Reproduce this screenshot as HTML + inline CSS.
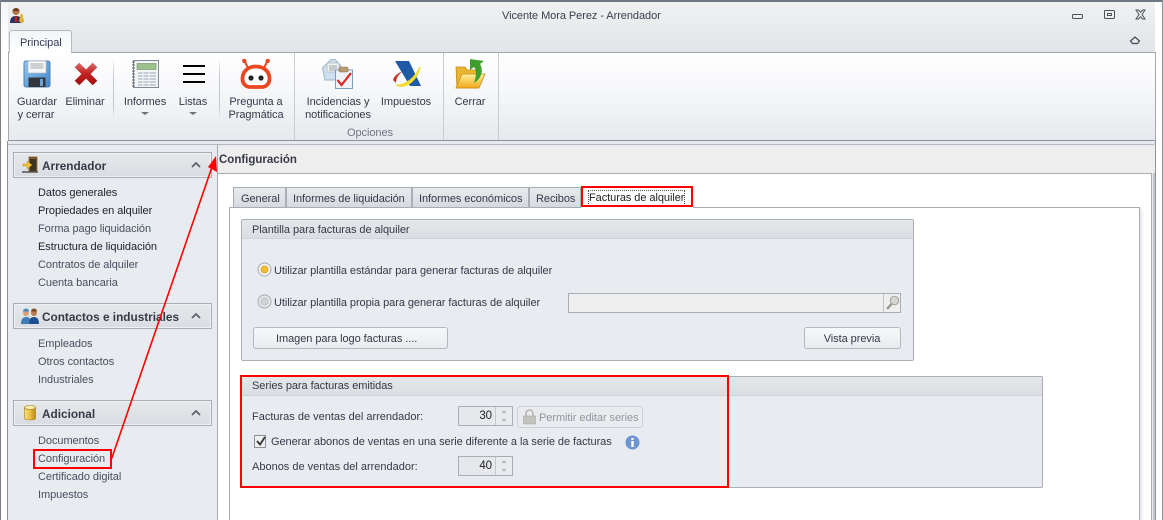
<!DOCTYPE html>
<html lang="es">
<head>
<meta charset="utf-8">
<title>Vicente Mora Perez - Arrendador</title>
<style>
html,body{margin:0;padding:0}
body{width:1163px;height:520px;position:relative;overflow:hidden;background:#fff;font-family:"Liberation Sans",sans-serif;font-size:11px;letter-spacing:-.06px;color:#363948}
div,span,svg{position:absolute;box-sizing:border-box}
.t{white-space:nowrap;line-height:14px;height:14px;margin-top:1px}
.c{text-align:center;transform:translateX(-50%)}
.d{color:#1d1f2b}
.g{color:#47505f}
.h{font-weight:bold;font-size:11.8px;letter-spacing:0;color:#353a46}
.gh{background:linear-gradient(#e6e9ec,#d9dde1);border:1px solid #a9adb5;height:26px;left:13px;width:199px;box-shadow:inset 0 0 0 1px #eef0f3}
.vs{width:1px;background:linear-gradient(rgba(190,195,200,.2),#c4c8cc 30%,#c4c8cc 80%,rgba(190,195,200,.1))}
.tab{top:187px;height:20px;background:linear-gradient(#e9ebee,#d6d9de);border:1px solid #a9adb5;border-bottom:0}
.btn{background:linear-gradient(#f7f8f9,#e9ebee);border:1px solid #b4b8bf;border-radius:3px}
.gb{background:#e8ebf0;border:1px solid #abafb6;border-radius:2px}
.gbh{left:0;top:0;right:0;height:19px;background:linear-gradient(#e4e7ea,#dbdee2);border-bottom:1px solid #cfd2d7}
.spin{background:#e9ebef;border:1px solid #a9adb5;height:20px;width:55px;left:458px}
.spin i{position:absolute;left:0;top:0;width:37px;height:18px;border-right:1px solid #c5c8ce;background:#e6e8ec;font-style:normal;color:#222;text-align:right;padding-right:3px;line-height:18px;box-sizing:border-box;font-size:11.5px}
.red{border:2px solid #f00}
</style>
</head>
<body>
<!-- window chrome -->
<div style="left:0;top:0;width:1163px;height:2px;background:#6d7882"></div>
<div style="left:0;top:0;width:1px;height:520px;background:#7b8088"></div>
<div style="left:1162px;top:0;width:1px;height:520px;background:#8d9298"></div>
<div style="left:8px;top:2px;width:1147px;height:50px;background:linear-gradient(#eff1f2,#e2e5e9)"></div>
<div style="left:1px;top:2px;width:7px;height:50px;background:linear-gradient(#f5f6f7,#ffffff)"></div>

<!-- app icon -->
<svg style="left:9px;top:7px" width="16" height="17" viewBox="0 0 16 17">
<circle cx="7" cy="4.500" r="3.600" fill="#b5764a"/><path d="M3.500 4a3.600 3.600 0 0 1 7 0z" fill="#6b3a1d"/>
<path d="M1 16c0-5 2-7 6-7s6 2 6 7z" fill="#27335f"/><path d="M6 9h2l.5 6h-3z" fill="#c02020"/>
<path d="M12 6l2 2v3l1 1v3l-3 1-2-2z" fill="#e7b32f"/>
</svg>
<div class="t" style="left:502px;top:8px;color:#3b3f4c">Vicente Mora Perez - Arrendador</div>

<!-- window buttons -->
<svg style="left:1070px;top:8px" width="80" height="14" viewBox="0 0 80 14" fill="none" stroke="#4c5058" stroke-width="1">
<rect x="2.500" y="6.500" width="10" height="4" rx="1"/>
<rect x="34.500" y="2.500" width="10" height="8" rx="1"/><rect x="37.500" y="5.500" width="4" height="2"/>
<path d="M66 2h2.500l2 2.200L72.500 2H75l-3 4.500 3 4.500h-2.500l-2-2.300-2 2.300H66l3-4.500z"/>
</svg>
<svg style="left:1129px;top:35px" width="12" height="10" viewBox="0 0 12 10" fill="none" stroke="#44484f" stroke-width="1.200"><path d="M1.500 6L6 2l4.500 4-2 2.500h-5z"/></svg>

<!-- tab Principal -->
<div style="left:8px;top:52px;width:1148px;height:89px;background:linear-gradient(#ffffff,#f7f8fa 40%,#e6e9ed);border:1px solid #a3a6aa;border-bottom:1px solid #8f9398"></div>
<div style="left:9px;top:30px;width:63px;height:23px;background:linear-gradient(#f3f5f7,#fff);border:1px solid #b5b9bd;border-bottom:0;border-radius:3px 3px 0 0"></div>
<div class="t" style="left:20px;top:35px;color:#333a5a">Principal</div>

<!-- ribbon separators -->
<div class="vs" style="left:113px;top:60px;height:58px"></div>
<div class="vs" style="left:219px;top:60px;height:58px"></div>
<div style="left:294px;top:53px;width:1px;height:87px;background:#c9ccd0"></div>
<div style="left:443px;top:53px;width:1px;height:87px;background:#c9ccd0"></div>
<div style="left:498px;top:53px;width:1px;height:87px;background:#c9ccd0"></div>

<!-- Guardar icon -->
<svg style="left:23px;top:60px" width="28" height="28" viewBox="0 0 28 28">
<defs><linearGradient id="fl" x1="0" y1="0" x2="1" y2="1"><stop offset="0" stop-color="#96c8f0"/><stop offset="1" stop-color="#3f86cc"/></linearGradient></defs>
<rect x="1" y="1" width="26" height="26" rx="2" fill="url(#fl)" stroke="#4f7fb2"/>
<rect x="5" y="1" width="18" height="12" fill="#f6f7f8" stroke="#a8b0b8" stroke-width=".6"/>
<path d="M7.500 4h13M7.500 6h13M7.500 8h13" stroke="#8c9094" stroke-width=".8"/>
<rect x="5.500" y="17.500" width="17" height="9.500" fill="#33373c"/><rect x="17" y="19" width="3" height="7" fill="#6fa2d0"/>
</svg>
<!-- Eliminar icon -->
<svg style="left:74px;top:62px" width="24" height="24" viewBox="0 0 24 24">
<defs><linearGradient id="xr" x1="0" y1="0" x2="0" y2="1"><stop offset="0" stop-color="#d65c5c"/><stop offset=".45" stop-color="#c42424"/><stop offset="1" stop-color="#a81010"/></linearGradient></defs>
<path d="M3 3L21 21M21 3L3 21" fill="none" stroke="url(#xr)" stroke-width="6.500"/>
</svg>
<!-- Informes icon -->
<svg style="left:131px;top:59px" width="28" height="30" viewBox="0 0 28 30">
<rect x="2.500" y="1.500" width="25" height="27" fill="#f3f5f4" stroke="#7d8a98"/>
<path d="M1 3h3M1 6h3M1 9h3M1 12h3M1 15h3M1 18h3M1 21h3M1 24h3M1 27h3" stroke="#5e6670" stroke-width="1"/>
<rect x="6" y="4.500" width="19" height="6" fill="#9cc08c" stroke="#6f8f66" stroke-width=".6"/>
<path d="M7 14h18M7 17h18M7 20h18M7 23h18M7 26h18" stroke="#a6b6c8" stroke-width="1.200"/>
<path d="M12 13v14M18 13v14" stroke="#f3f5f4"/>
</svg>
<!-- Listas icon -->
<svg style="left:183px;top:63.500px" width="22" height="20" viewBox="0 0 22 20"><path d="M0 2h22M0 10h22M0 18h22" stroke="#000" stroke-width="2"/></svg>
<!-- Pregunta icon -->
<svg style="left:240px;top:58px" width="32" height="32" viewBox="0 0 32 32">
<path d="M5 4l3 6M27 4l-3 6" stroke="#e8471f" stroke-width="2"/>
<circle cx="4.300" cy="2.900" r="2.200" fill="#e8471f"/><circle cx="27.700" cy="2.900" r="2.200" fill="#e8471f"/>
<path d="M16 8.500c9 0 13.500 6 13.500 12 0 5.500-3.500 8.500-8 8.500H10.500c-4.500 0-8-3-8-8.500 0-6 4.500-12 13.500-12z" fill="#fff" stroke="#e8471f" stroke-width="3.800"/>
<circle cx="11" cy="20" r="2.600" fill="#222"/><circle cx="21" cy="20" r="2.600" fill="#222"/>
</svg>
<!-- Incidencias icon -->
<svg style="left:321px;top:58px" width="34" height="32" viewBox="0 0 34 32">
<path d="M1.500 10L10 1.500h4L20 8v14H4z" fill="#cfe0ee" stroke="#9bb5ca"/>
<rect x="6" y="5" width="12" height="9" fill="#eef1f2" stroke="#a7b0b8" stroke-width=".6"/>
<path d="M8 8h8M8 10h8M8 12h8" stroke="#a0a8a8" stroke-width="1"/>
<rect x="14.500" y="12" width="17" height="18.500" fill="#eef3fa" stroke="#7e9cc0"/>
<rect x="18" y="9" width="9" height="5" rx="1.500" fill="#b89a70" stroke="#8d7550" stroke-width=".6"/>
<path d="M16.500 22l4 5 9.500-12" fill="none" stroke="#e2231c" stroke-width="2.200"/>
</svg>
<!-- Impuestos icon -->
<svg style="left:391px;top:60px" width="32" height="28" viewBox="0 0 32 28">
<path d="M4 1H18L30 26H19z" fill="#1f5aa6"/>
<path d="M5 25C14 26 24 18 29 7C27 18 16 30 5 25z" fill="#f2dc2c" stroke="#f2dc2c" stroke-width="1.200"/>
<path d="M2 20C3 16 7 13 12 11C8 14 5 18 5 23z" fill="#c2362f"/>
</svg>
<!-- Cerrar icon -->
<svg style="left:454px;top:58px" width="32" height="32" viewBox="0 0 32 32">
<defs><linearGradient id="fo" x1="0" y1="0" x2="0" y2="1"><stop offset="0" stop-color="#fff29a"/><stop offset="1" stop-color="#f0a818"/></linearGradient></defs>
<path d="M2 9h9l2 3h11v18H3z" fill="#e8b630" stroke="#c88a18" stroke-width=".8"/>
<path d="M8 16h23l-6 14H2z" fill="url(#fo)" stroke="#c88a18" stroke-width=".8"/>
<path d="M16 1V12L20 9C23 12 22 20 20 25C27 21 30 13 26 6L30 3z" fill="#3ea02a"/>
</svg>

<!-- ribbon labels -->
<div class="t c" style="left:37px;top:94px">Guardar</div>
<div class="t c" style="left:36px;top:107px">y cerrar</div>
<div class="t c" style="left:85px;top:94px">Eliminar</div>
<div class="t c" style="left:145px;top:94px">Informes</div>
<div class="t c" style="left:193px;top:94px">Listas</div>
<div style="left:141px;top:112px;border:4px solid transparent;border-top:3px solid #6c7078;border-bottom:0"></div>
<div style="left:189px;top:112px;border:4px solid transparent;border-top:3px solid #6c7078;border-bottom:0"></div>
<div class="t c" style="left:256px;top:94px">Pregunta a</div>
<div class="t c" style="left:256px;top:107px">Pragmática</div>
<div class="t c" style="left:338px;top:94px">Incidencias y</div>
<div class="t c" style="left:338px;top:107px">notificaciones</div>
<div class="t c" style="left:406px;top:94px">Impuestos</div>
<div class="t c" style="left:370px;top:125px;color:#6e7485">Opciones</div>
<div class="t c" style="left:470px;top:94px">Cerrar</div>

<!-- left nav panel -->
<div style="left:7px;top:141px;width:1149px;height:379px;background:#e6e9ee;border-left:1px solid #8f9398;border-right:1px solid #8f9398"></div>
<div style="left:8px;top:144px;width:1146px;height:1px;background:#b4b8be"></div>
<div style="left:8px;top:145px;width:210px;height:375px;background:#e8ebf0;border-right:1px solid #a7abb2"></div>

<div class="gh" style="top:152px"></div>
<div class="gh" style="top:303px"></div>
<div class="gh" style="top:400px"></div>
<svg style="left:21px;top:156px" width="18" height="18" viewBox="0 0 18 18">
<rect x="8" y="1" width="8" height="15" fill="#8a5a24" stroke="#5e3d18" stroke-width=".6"/><rect x="9" y="3" width="6" height="12" fill="#3b3420"/>
<path d="M2 8h4V5l5 4-5 4v-3H2z" fill="#f0c73c" stroke="#b88a18" stroke-width=".5"/><path d="M1 16h16" stroke="#555" stroke-width="1.500"/>
</svg>
<svg style="left:21px;top:308px" width="18" height="17" viewBox="0 0 18 17">
<circle cx="5" cy="5" r="3" fill="#d9a070"/><path d="M2 3.500a3 3 0 0 1 6 0z" fill="#4a88c0"/><path d="M0 16c0-5 2-7 5-7s6 2 6 7z" fill="#3f7cb8"/>
<circle cx="13" cy="5" r="3" fill="#b87a50"/><path d="M10 3.500a3 3 0 0 1 6 0z" fill="#7a4a24"/><path d="M8 16c0-5 2-7 5-7s5 2 5 7z" fill="#1f4f8e"/>
</svg>
<svg style="left:24px;top:405px" width="12" height="16" viewBox="0 0 12 16">
<defs><linearGradient id="cy" x1="0" x2="1" y1="0" y2="0"><stop offset="0" stop-color="#f6e28a"/><stop offset=".5" stop-color="#eac040"/><stop offset="1" stop-color="#b88a18"/></linearGradient></defs>
<path d="M.5 2.500v11c0 2 11 2 11 0v-11z" fill="url(#cy)" stroke="#a87c18" stroke-width=".6"/><ellipse cx="6" cy="2.500" rx="5.500" ry="2" fill="#f8eeb0" stroke="#a87c18" stroke-width=".6"/>
</svg>
<div class="t h" style="left:42px;top:158px">Arrendador</div>
<div class="t h" style="left:42px;top:309px">Contactos e industriales</div>
<div class="t h" style="left:42px;top:406px">Adicional</div>
<svg style="left:191px;top:161px" width="10" height="7" viewBox="0 0 10 7"><path d="M1 6l4-4 4 4" fill="none" stroke="#5d626b" stroke-width="1.800"/></svg>
<svg style="left:191px;top:312px" width="10" height="7" viewBox="0 0 10 7"><path d="M1 6l4-4 4 4" fill="none" stroke="#5d626b" stroke-width="1.800"/></svg>
<svg style="left:191px;top:409px" width="10" height="7" viewBox="0 0 10 7"><path d="M1 6l4-4 4 4" fill="none" stroke="#5d626b" stroke-width="1.800"/></svg>

<div class="t d" style="left:38px;top:185px">Datos generales</div>
<div class="t d" style="left:38px;top:203px">Propiedades en alquiler</div>
<div class="t g" style="left:38px;top:221px">Forma pago liquidación</div>
<div class="t d" style="left:38px;top:239px">Estructura de liquidación</div>
<div class="t g" style="left:38px;top:257px">Contratos de alquiler</div>
<div class="t g" style="left:38px;top:275px">Cuenta bancaria</div>
<div class="t g" style="left:38px;top:336px">Empleados</div>
<div class="t g" style="left:38px;top:354px">Otros contactos</div>
<div class="t g" style="left:38px;top:372px">Industriales</div>
<div class="t g" style="left:38px;top:433px">Documentos</div>
<div class="t g" style="left:38px;top:451px">Configuración</div>
<div class="t g" style="left:38px;top:469px">Certificado digital</div>
<div class="t g" style="left:38px;top:487px">Impuestos</div>

<!-- main panel -->
<div style="left:218px;top:146px;width:937px;height:27px;background:#efeeee"></div>
<div class="t h" style="left:219px;top:152px;font-size:11.5px">Configuración</div>
<div style="left:217px;top:173px;width:935px;height:347px;background:#fff;border:1px solid #a7abb2;border-bottom:0"></div>
<div style="left:1153px;top:173px;width:2px;height:347px;background:#c3c6cb"></div>
<div style="left:229px;top:207px;width:911px;height:313px;background:#fff;border:1px solid #a7abb2;border-bottom:0;box-shadow:2px 2px 3px #e3e5e8"></div>

<!-- tabs -->
<div class="tab" style="left:233px;width:53px"></div>
<div class="tab" style="left:286px;width:126px"></div>
<div class="tab" style="left:412px;width:117px"></div>
<div class="tab" style="left:529px;width:52px"></div>
<div style="left:581px;top:187px;width:112px;height:21px;background:#fff"></div>
<div class="t" style="left:241px;top:191px">General</div>
<div class="t" style="left:293px;top:191px">Informes de liquidación</div>
<div class="t" style="left:419px;top:191px">Informes económicos</div>
<div class="t" style="left:536px;top:191px">Recibos</div>
<div class="t" style="left:589px;top:190px;color:#222;outline:1px dotted #555">Facturas de alquiler</div>

<!-- group 1 -->
<div class="gb" style="left:241px;top:219px;width:673px;height:142px"><div class="gbh"></div></div>
<div class="t" style="left:252px;top:222px">Plantilla para facturas de alquiler</div>
<svg style="left:257px;top:262px" width="15" height="15" viewBox="0 0 15 15"><circle cx="7.500" cy="7.500" r="6.500" fill="#f3f3f3" stroke="#a8abb0"/><circle cx="7.500" cy="7.500" r="3.500" fill="#f3bd30" stroke="#d89a18" stroke-width=".7"/></svg>
<div class="t" style="left:274px;top:263px">Utilizar plantilla estándar para generar facturas de alquiler</div>
<svg style="left:257px;top:294px" width="15" height="15" viewBox="0 0 15 15"><circle cx="7.500" cy="7.500" r="6.500" fill="#e8e9ea" stroke="#a8abb0"/><circle cx="7.500" cy="7.500" r="3.800" fill="#cfd1d3" stroke="#b8babd" stroke-width=".7"/></svg>
<div class="t" style="left:274px;top:295px">Utilizar plantilla propia para generar facturas de alquiler</div>
<div style="left:568px;top:293px;width:333px;height:20px;background:#efefef;border:1px solid #a9adb5"></div>
<div style="left:883px;top:294px;width:1px;height:18px;background:#bfc2c7"></div>
<svg style="left:885px;top:295px" width="15" height="16" viewBox="0 0 15 16"><circle cx="9.500" cy="5.500" r="4.300" fill="#d4d4d0" stroke="#a3a39c"/><path d="M6.500 9l-4.500 5" stroke="#9a9a92" stroke-width="2.400"/></svg>
<div class="btn" style="left:253px;top:327px;width:195px;height:22px"></div>
<div class="t" style="left:276px;top:331px">Imagen para logo facturas ....</div>
<div class="btn" style="left:804px;top:327px;width:97px;height:22px"></div>
<div class="t c" style="left:852px;top:331px">Vista previa</div>

<!-- group 2 -->
<div class="gb" style="left:241px;top:376px;width:802px;height:112px"><div class="gbh"></div></div>
<div class="t" style="left:252px;top:378px">Series para facturas emitidas</div>
<div class="t" style="left:252px;top:409px;letter-spacing:0">Facturas de ventas del arrendador:</div>
<div class="spin" style="top:406px"><i>30</i></div>
<div class="spin" style="top:456px"><i>40</i></div>
<svg style="left:499px;top:408px" width="10" height="16" viewBox="0 0 10 16"><path d="M2.500 5L5 2l2.500 3zM2.500 11L5 14l2.500-3z" fill="#b4b7bc"/></svg>
<svg style="left:499px;top:458px" width="10" height="16" viewBox="0 0 10 16"><path d="M2.500 5L5 2l2.500 3zM2.500 11L5 14l2.500-3z" fill="#b4b7bc"/></svg>
<div style="left:517px;top:406px;width:126px;height:22px;background:#e9ebee;border:1px solid #ced1d6;border-radius:3px"></div>
<svg style="left:522px;top:409px" width="15" height="16" viewBox="0 0 15 16"><path d="M4 7V4.500a3.500 3.500 0 0 1 7 0V7" fill="none" stroke="#b5b5b0" stroke-width="1.500"/><rect x="1.500" y="7" width="12" height="8" fill="#c3c3be" stroke="#a8a8a2" stroke-width=".6"/></svg>
<div class="t" style="left:539px;top:410px;color:#92969f">Permitir editar series</div>
<div style="left:254px;top:435px;width:12px;height:13px;background:#f0f0f0;border:1px solid #8e9096"></div>
<svg style="left:255px;top:435px" width="12" height="12" viewBox="0 0 12 12"><path d="M2 6l3 3.500L10 2" fill="none" stroke="#333" stroke-width="1.800"/></svg>
<div class="t" style="left:271px;top:434px">Generar abonos de ventas en una serie diferente a la serie de facturas</div>
<svg style="left:625px;top:435px" width="15" height="15" viewBox="0 0 15 15"><circle cx="7.500" cy="7.500" r="7" fill="#6f94d4"/><rect x="6.300" y="6" width="2.400" height="6" fill="#fff"/><rect x="6.300" y="3" width="2.400" height="2" fill="#fff"/></svg>
<div class="t" style="left:252px;top:459px;letter-spacing:0">Abonos de ventas del arrendador:</div>

<!-- red annotations -->
<div class="red" style="left:581px;top:186px;width:112px;height:21px"></div>
<div class="red" style="left:33px;top:449px;width:79px;height:20px"></div>
<div class="red" style="left:240px;top:375px;width:489px;height:113px"></div>
<svg style="left:0;top:0" width="1163" height="520" viewBox="0 0 1163 520">
<path d="M111.500 459L212 167" stroke="#f00" stroke-width="1.600" fill="none"/>
<path d="M216 156L217 172 208 167z" fill="#f00"/>
</svg>
</body>
</html>
